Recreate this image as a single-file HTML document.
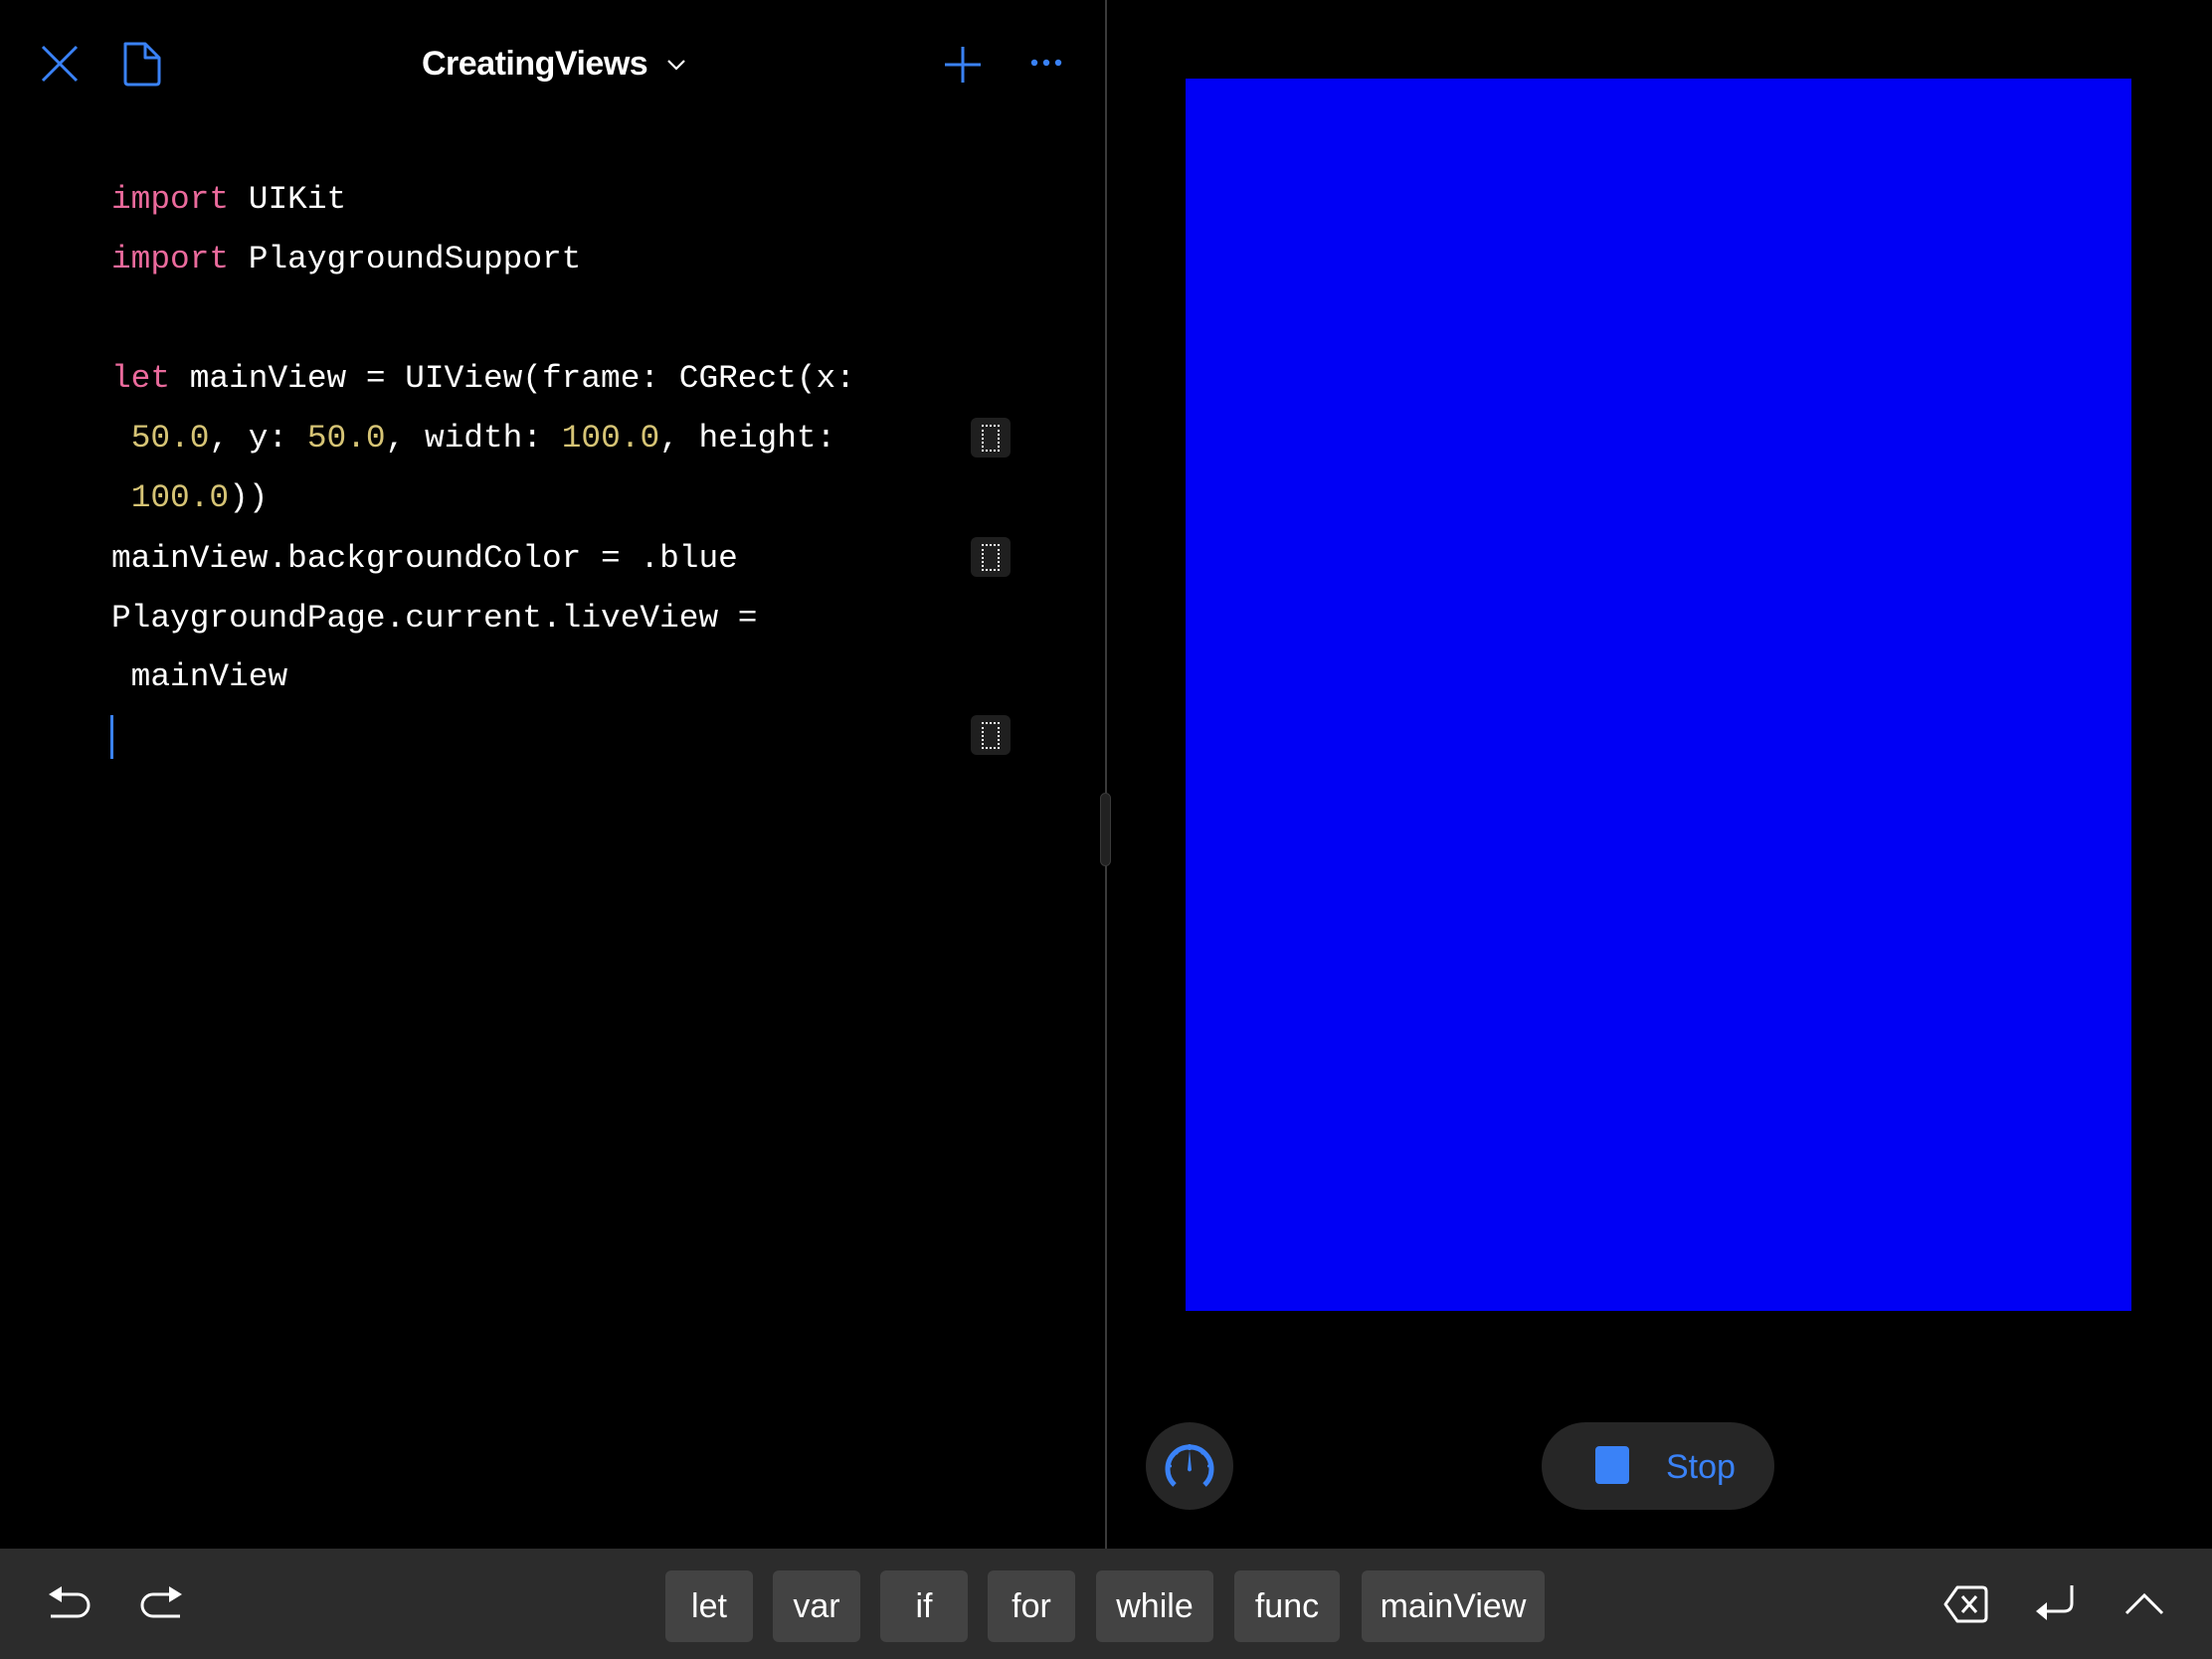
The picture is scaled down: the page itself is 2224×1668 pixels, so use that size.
<!DOCTYPE html>
<html><head><meta charset="utf-8"><style>
html,body{margin:0;padding:0;background:#000;width:2224px;height:1668px;overflow:hidden;position:relative;font-family:"Liberation Sans",sans-serif}
.abs{position:absolute}
.code{position:absolute;left:112px;font-family:"Liberation Mono",monospace;font-size:32.8px;color:#fff;white-space:pre;line-height:40px}
.k{color:#ea6a9c}.n{color:#d6c475}
.box{position:absolute;left:976px;width:40px;height:40px;background:#1f1f1f;border-radius:6px}
.box i{position:absolute;left:11px;top:7px;width:14px;height:23px;border:2px dotted #fff}
.btn{position:absolute;top:1579px;height:72px;background:#434343;border-radius:6px;color:#fff;font-size:34px;line-height:72px;text-align:center}
</style></head><body>
<!-- header -->
<svg class="abs" style="left:40px;top:44px" width="40" height="40" viewBox="0 0 40 40"><path d="M3 3L37 37M37 3L3 37" stroke="#3a82f7" stroke-width="3" fill="none"/></svg>
<svg class="abs" style="left:122px;top:40px" width="42" height="48" viewBox="0 0 42 48"><path d="M4 4H24L38 18V42Q38 45 35 45H7Q4 45 4 42Z M24 4V18H38" stroke="#3a82f7" stroke-width="3" fill="none" stroke-linejoin="round"/></svg>
<div class="abs" style="left:424px;top:45px;font-size:34px;font-weight:bold;color:#fff;letter-spacing:-0.5px">CreatingViews</div>
<svg class="abs" style="left:670px;top:58px" width="20" height="14" viewBox="0 0 20 14"><path d="M2 3L10 11L18 3" stroke="#fff" stroke-width="2.2" fill="none"/></svg>
<svg class="abs" style="left:948px;top:45px" width="40" height="40" viewBox="0 0 40 40"><path d="M20 2V38M2 20H38" stroke="#3a82f7" stroke-width="3"/></svg>
<svg class="abs" style="left:1036px;top:58px" width="32" height="10" viewBox="0 0 32 10"><circle cx="4" cy="5" r="3.2" fill="#3a82f7"/><circle cx="16" cy="5" r="3.2" fill="#3a82f7"/><circle cx="28" cy="5" r="3.2" fill="#3a82f7"/></svg>
<!-- code -->
<div class="code" style="top:181px"><span class="k">import</span> UIKit</div>
<div class="code" style="top:241px"><span class="k">import</span> PlaygroundSupport</div>
<div class="code" style="top:361px"><span class="k">let</span> mainView = UIView(frame: CGRect(x:</div>
<div class="code" style="top:421px"> <span class="n">50.0</span>, y: <span class="n">50.0</span>, width: <span class="n">100.0</span>, height:</div>
<div class="code" style="top:481px"> <span class="n">100.0</span>))</div>
<div class="code" style="top:542px">mainView.backgroundColor = .blue</div>
<div class="code" style="top:602px">PlaygroundPage.current.liveView =</div>
<div class="code" style="top:661px"> mainView</div>
<div class="abs" style="left:111px;top:719px;width:3px;height:44px;background:#3a82f7"></div>
<div class="box" style="top:420px"><i></i></div>
<div class="box" style="top:540px"><i></i></div>
<div class="box" style="top:719px"><i></i></div>
<!-- divider -->
<div class="abs" style="left:1111px;top:0;width:2px;height:1557px;background:#3a3a3a"></div>
<div class="abs" style="left:1106px;top:797px;width:11px;height:74px;background:#222;border:1px solid #3a3a3a;border-radius:6px;box-sizing:border-box"></div>
<!-- preview -->
<div class="abs" style="left:1192px;top:79px;width:951px;height:1239px;background:#0000f5"></div>
<div class="abs" style="left:1152px;top:1430px;width:88px;height:88px;border-radius:50%;background:#262626"></div>
<svg class="abs" style="left:1166px;top:1444px" width="60" height="60" viewBox="0 0 60 60"><path d="M15 49A22 22 0 1 1 45 49" stroke="#3a82f7" stroke-width="5" fill="none"/><path d="M30 8V14M15 15L18 18M45 15L42 18M8 30H12M52 30H48" stroke="#3a82f7" stroke-width="2.5"/><path d="M28 34L30 14L32 34Q30 37 28 34Z" fill="#3a82f7"/></svg>
<div class="abs" style="left:1550px;top:1430px;width:234px;height:88px;border-radius:44px;background:#262626"></div>
<div class="abs" style="left:1604px;top:1454px;width:34px;height:38px;border-radius:4px;background:#3a82f7"></div>
<div class="abs" style="left:1675px;top:1455px;font-size:34px;color:#3a82f7;line-height:40px">Stop</div>
<!-- bottom bar -->
<div class="abs" style="left:0;top:1557px;width:2224px;height:111px;background:#2c2c2c"></div>
<svg class="abs" style="left:46px;top:1592px" width="50" height="44" viewBox="0 0 50 44"><path d="M3 11L16 3V19Z" fill="#fff"/><path d="M14 11H32A11 11 0 0 1 32 33H5" stroke="#fff" stroke-width="3" fill="none"/></svg>
<svg class="abs" style="left:136px;top:1592px" width="50" height="44" viewBox="0 0 50 44"><path d="M47 11L34 3V19Z" fill="#fff"/><path d="M36 11H18A11 11 0 0 0 18 33H45" stroke="#fff" stroke-width="3" fill="none"/></svg>
<div class="btn" style="left:669px;width:88px">let</div>
<div class="btn" style="left:777px;width:88px">var</div>
<div class="btn" style="left:885px;width:88px">if</div>
<div class="btn" style="left:993px;width:88px">for</div>
<div class="btn" style="left:1102px;width:118px">while</div>
<div class="btn" style="left:1241px;width:106px">func</div>
<div class="btn" style="left:1369px;width:184px">mainView</div>
<svg class="abs" style="left:1952px;top:1592px" width="48" height="42" viewBox="0 0 48 42"><path d="M16 4H41Q45 4 45 8V34Q45 38 41 38H16L4 21Z" stroke="#fff" stroke-width="3" fill="none" stroke-linejoin="round"/><path d="M21 13L35 29M35 13L21 29" stroke="#fff" stroke-width="3"/></svg>
<svg class="abs" style="left:2044px;top:1592px" width="44" height="44" viewBox="0 0 44 44"><path d="M39 2V20Q39 28 31 28H12" stroke="#fff" stroke-width="3" fill="none"/><path d="M3 28L14 19V37Z" fill="#fff"/></svg>
<svg class="abs" style="left:2136px;top:1600px" width="40" height="26" viewBox="0 0 40 26"><path d="M2 22L20 4L38 22" stroke="#fff" stroke-width="3" fill="none"/></svg>
</body></html>
